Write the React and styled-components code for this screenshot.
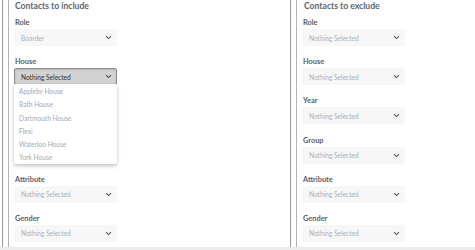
import React from "react";
import styled, { createGlobalStyle } from "styled-components";

const Global = createGlobalStyle`
  html, body { margin: 0; padding: 0; background: #fff; }
  body { font-family: Lato, "Open Sans", sans-serif; overflow: hidden; }
`;

const Page = styled.div`
  width: 475px;
  height: 250px;
  display: flex;
  flex-direction: column;
`;

const Columns = styled.div`
  flex: 1;
  display: grid;
  grid-template-columns: 288px 1fr;
  padding-left: 2px;
  min-height: 0;
`;

const Footer = styled.div`
  height: 3px;
  background: #ececec;
`;

const Column = styled.div`
  border-left: 1px solid #9a9a9a;
  padding-left: 5px;
  display: flex;
`;

const Inner = styled.div`
  flex: 1;
  border-left: 1px solid #b4b4b4;
  padding-left: 5px;
`;

const Heading = styled.div`
  font-size: 8.6px;
  font-weight: 700;
  color: #5b6672;
  line-height: 11px;
  height: 11px;
  padding-left: ${(p) => p.$indent || 1}px;
  margin-top: 1px;
  margin-bottom: 5px;
  white-space: nowrap;
`;

const Group = styled.div`
  position: relative;
  margin-bottom: 10.2px;
`;

const Spacer = styled.div`
  height: ${(p) => p.$h}px;
`;

const Label = styled.div`
  font-size: 7.4px;
  font-weight: 700;
  color: #56606a;
  line-height: 11px;
  height: 11px;
  padding-left: 1px;
  margin-bottom: 1px;
`;

const Select = styled.div`
  box-sizing: border-box;
  width: ${(p) => p.$w}px;
  height: 17px;
  display: flex;
  align-items: center;
  justify-content: space-between;
  padding: 0 4px 0 6px;
  border-radius: 2px;
  font-size: 6.6px;
  background: ${(p) => (p.$open ? "#d3d3d3" : "#f7f7f7")};
  border: 1px solid ${(p) => (p.$open ? "#8c8c8c" : "#f7f7f7")};
  color: ${(p) => (p.$open ? "#2e2e2e" : "#a9b0b8")};
  box-shadow: ${(p) => (p.$open ? "inset 0 1px 2px rgba(0,0,0,0.15)" : "none")};
`;

const Chevron = styled.svg`
  width: 7px;
  height: 5px;
  flex: none;
`;

const Menu = styled.div`
  position: absolute;
  left: 0;
  top: 28px;
  width: 103px;
  box-sizing: border-box;
  background: #fff;
  border-radius: 2px;
  box-shadow: 0 2px 4px rgba(0, 0, 0, 0.22), 0 0 1px rgba(0, 0, 0, 0.18);
  padding: 1px 0 0;
  z-index: 5;
`;

const Item = styled.div`
  height: 13.2px;
  line-height: 13.2px;
  font-size: 6.6px;
  color: #a2aab3;
  padding-left: 5px;
  white-space: nowrap;
`;

const Arrow = () => (
  <Chevron viewBox="0 0 7 5">
    <path d="M1 1.2 L3.5 3.6 L6 1.2" fill="none" stroke="#555" strokeWidth="1.1" />
  </Chevron>
);

const Field = ({ label, value, w, open, items }) => (
  <Group>
    <Label>{label}</Label>
    <Select $w={w} $open={open}>
      <span>{value}</span>
      <Arrow />
    </Select>
    {open && (
      <Menu>
        {items.map((i) => (
          <Item key={i}>{i}</Item>
        ))}
      </Menu>
    )}
  </Group>
);

const houses = [
  "Appleby House",
  "Bath House",
  "Dartmouth House",
  "Flexi",
  "Waterloo House",
  "York House",
];

export default function App() {
  return (
    <Page>
      <Global />
      <Columns>
        <Column>
          <Inner>
            <Heading>Contacts to include</Heading>
            <Field label="Role" value="Boarder" w={103} />
            <Field label="House" value="Nothing Selected" w={103} open items={houses} />
            <Spacer $h={78.4} />
            <Field label="Attribute" value="Nothing Selected" w={103} />
            <Field label="Gender" value="Nothing Selected" w={103} />
          </Inner>
        </Column>
        <Column>
          <Inner>
            <Heading $indent={2}>Contacts to exclude</Heading>
            <Field label="Role" value="Nothing Selected" w={103} />
            <Field label="House" value="Nothing Selected" w={103} />
            <Field label="Year" value="Nothing Selected" w={103} />
            <Field label="Group" value="Nothing Selected" w={103} />
            <Field label="Attribute" value="Nothing Selected" w={103} />
            <Field label="Gender" value="Nothing Selected" w={103} />
          </Inner>
        </Column>
      </Columns>
      <Footer />
    </Page>
  );
}
